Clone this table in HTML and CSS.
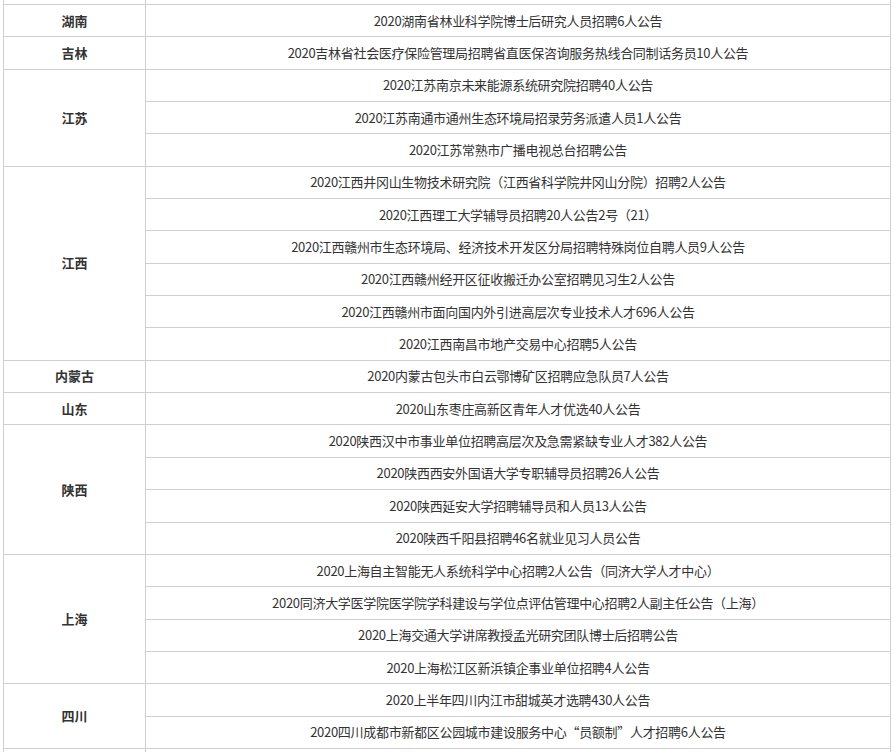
FILE: index.html
```html
<!DOCTYPE html>
<html lang="zh-CN">
<head>
<meta charset="utf-8">
<title>招聘公告</title>
<link rel="stylesheet" href="styles.css">
</head>
<body>
<table class="list">
  <colgroup><col class="c-prov"><col class="c-title"></colgroup>
  <tbody>
    <tr><td class="prov"></td><td></td></tr>
    <tr><td class="prov">湖南</td><td>2020湖南省林业科学院博士后研究人员招聘6人公告</td></tr>
    <tr><td class="prov">吉林</td><td>2020吉林省社会医疗保险管理局招聘省直医保咨询服务热线合同制话务员10人公告</td></tr>
    <tr><td class="prov" rowspan="3">江苏</td><td>2020江苏南京未来能源系统研究院招聘40人公告</td></tr>
    <tr><td>2020江苏南通市通州生态环境局招录劳务派遣人员1人公告</td></tr>
    <tr><td>2020江苏常熟市广播电视总台招聘公告</td></tr>
    <tr><td class="prov" rowspan="6">江西</td><td>2020江西井冈山生物技术研究院（江西省科学院井冈山分院）招聘2人公告</td></tr>
    <tr><td>2020江西理工大学辅导员招聘20人公告2号（21）</td></tr>
    <tr><td>2020江西赣州市生态环境局、经济技术开发区分局招聘特殊岗位自聘人员9人公告</td></tr>
    <tr><td>2020江西赣州经开区征收搬迁办公室招聘见习生2人公告</td></tr>
    <tr><td>2020江西赣州市面向国内外引进高层次专业技术人才696人公告</td></tr>
    <tr><td>2020江西南昌市地产交易中心招聘5人公告</td></tr>
    <tr><td class="prov">内蒙古</td><td>2020内蒙古包头市白云鄂博矿区招聘应急队员7人公告</td></tr>
    <tr><td class="prov">山东</td><td>2020山东枣庄高新区青年人才优选40人公告</td></tr>
    <tr><td class="prov" rowspan="4">陕西</td><td>2020陕西汉中市事业单位招聘高层次及急需紧缺专业人才382人公告</td></tr>
    <tr><td>2020陕西西安外国语大学专职辅导员招聘26人公告</td></tr>
    <tr><td>2020陕西延安大学招聘辅导员和人员13人公告</td></tr>
    <tr><td>2020陕西千阳县招聘46名就业见习人员公告</td></tr>
    <tr><td class="prov" rowspan="4">上海</td><td>2020上海自主智能无人系统科学中心招聘2人公告（同济大学人才中心）</td></tr>
    <tr><td>2020同济大学医学院医学院学科建设与学位点评估管理中心招聘2人副主任公告（上海）</td></tr>
    <tr><td>2020上海交通大学讲席教授孟光研究团队博士后招聘公告</td></tr>
    <tr><td>2020上海松江区新浜镇企事业单位招聘4人公告</td></tr>
    <tr><td class="prov" rowspan="2">四川</td><td>2020上半年四川内江市甜城英才选聘430人公告</td></tr>
    <tr><td>2020四川成都市新都区公园城市建设服务中心“员额制”人才招聘6人公告</td></tr>
    <tr><td class="prov"></td><td></td></tr>
  </tbody>
</table>
</body>
</html>
```

FILE: styles.css
```css
html, body {
  margin: 0;
  padding: 0;
  background: #ffffff;
}

body {
  font-family: "Noto Sans CJK SC", "Microsoft YaHei", "Liberation Sans", sans-serif;
  font-size: 13px;
  color: #333333;
  overflow: hidden;
}

.list {
  border-collapse: collapse;
  table-layout: fixed;
  width: 888px;
  margin: -28.35px 0 0 3px;
}

.c-prov {
  width: 142px;
}

.list tr {
  height: 32.35px;
}

.list td {
  border: 1px solid #cfcfcf;
  padding: 0 6px;
  text-align: center;
  vertical-align: middle;
  line-height: 18px;
  letter-spacing: -0.3px;
  white-space: nowrap;
}

.list td.prov {
  font-weight: bold;
  letter-spacing: 0;
}
```
